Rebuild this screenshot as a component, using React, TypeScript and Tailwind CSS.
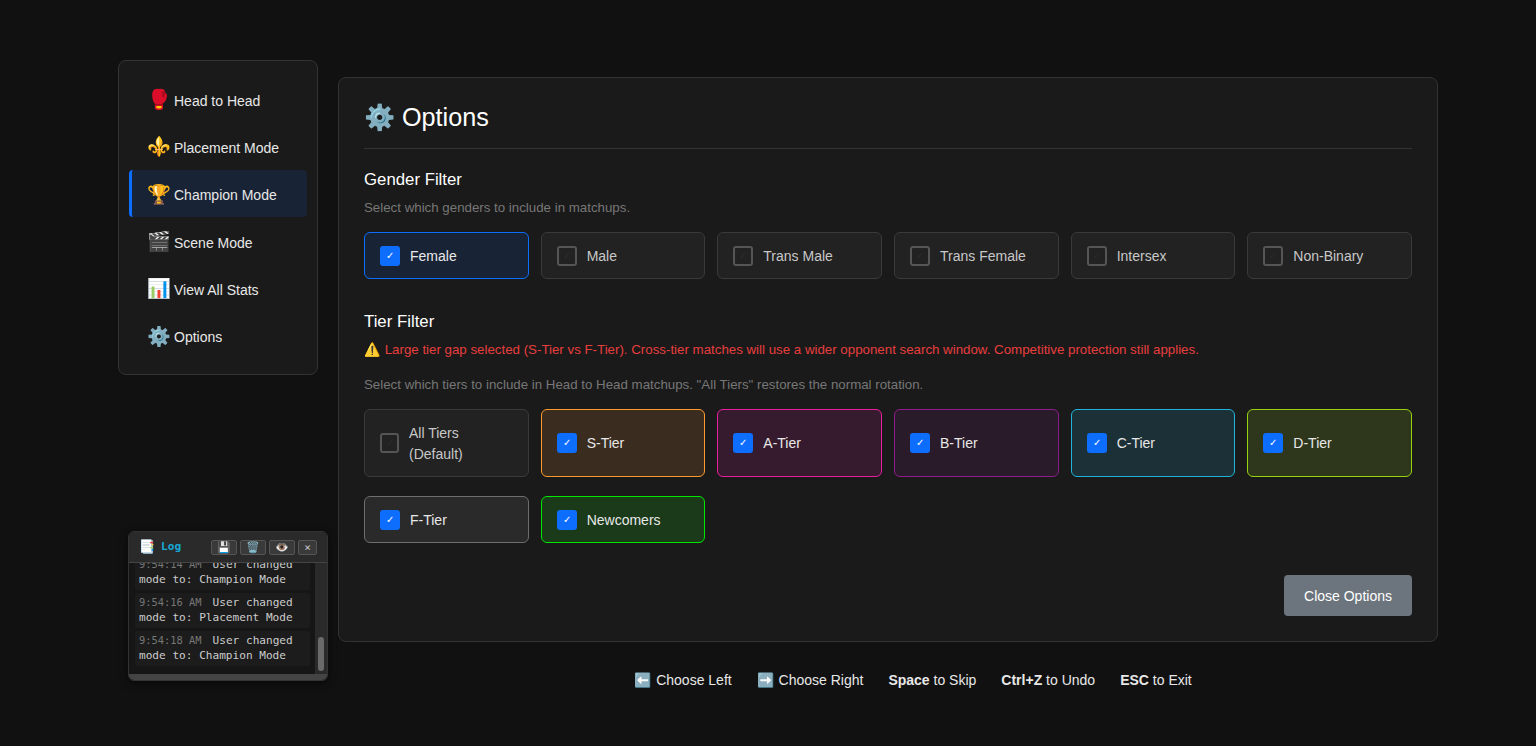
const navItems = [
  { icon: "🥊", label: "Head to Head" },
  { icon: "⚜️", label: "Placement Mode" },
  { icon: "🏆", label: "Champion Mode", active: true },
  { icon: "🎬", label: "Scene Mode" },
  { icon: "📊", label: "View All Stats" },
  { icon: "⚙️", label: "Options" },
];

const genders = ["Female", "Male", "Trans Male", "Trans Female", "Intersex", "Non-Binary"];

const tiers = [
  { label: "All Tiers (Default)", cls: "border-[#3a3a3a] bg-[#222222] text-[#c8c8c8]", on: false },
  { label: "S-Tier", cls: "border-[#ff9a2e] bg-[#3a2d20] text-[#e8e8e8]", on: true },
  { label: "A-Tier", cls: "border-[#e91e9c] bg-[#361b2e] text-[#e8e8e8]", on: true },
  { label: "B-Tier", cls: "border-[#8e1c8e] bg-[#2a1b2a] text-[#e8e8e8]", on: true },
  { label: "C-Tier", cls: "border-[#1eb4dc] bg-[#1c3037] text-[#e8e8e8]", on: true },
  { label: "D-Tier", cls: "border-[#96d20f] bg-[#2e371b] text-[#e8e8e8]", on: true },
  { label: "F-Tier", cls: "border-[#6e6e6e] bg-[#2a2a2a] text-[#e8e8e8]", on: true },
  { label: "Newcomers", cls: "border-[#00e600] bg-[#1a3a1a] text-[#e8e8e8]", on: true },
];

function Box({ on, narrow }: { on: boolean; narrow?: boolean }) {
  return on ? (
    <span className="flex h-5 w-5 shrink-0 items-center justify-center rounded-[3px] bg-[#0d6efd] text-[10px] leading-none text-white">✓</span>
  ) : (
    <span className={`flex h-5 shrink-0 items-center justify-center rounded-[3px] border-2 border-[#555555] text-[10px] leading-none text-[#2c2c2c] ${narrow ? "w-[19px]" : "w-5"}`}>✓</span>
  );
}

function Card({ label, on, cls, tall }: { label: string; on: boolean; cls: string; tall?: boolean }) {
  const nudge = !tall || label.startsWith("All");
  return (
    <div className={`flex items-center gap-[10px] rounded-md border px-[15px] text-[14px] leading-[21px] ${tall ? "h-[68px]" : "h-[47px]"} ${cls}`}>
      <Box on={on} narrow={label.startsWith("All")} />
      <span className={nudge ? "pt-[2px]" : ""}>{label}</span>
    </div>
  );
}

function LogEntry({ time, mode }: { time: string; mode: string }) {
  return (
    <div className="rounded-[2px] bg-[#1c1c1c] py-[2px] pl-[4px] text-[11.1px] leading-[15.5px] text-[#cccccc]">
      <span className="mr-[11px] text-[10.4px] text-[#777777]">{time}</span>
      User changed mode to: {mode} Mode
    </div>
  );
}

function MiniBtn({ children, w }: { children: string; w: string }) {
  return (
    <span className={`flex h-[15px] items-center justify-center rounded-[2px] border border-[#555555] bg-[#3a3a3a] text-[11px] leading-none text-[#cccccc] ${w}`}>{children}</span>
  );
}

export default function App() {
  return (
    <div className="relative flex h-[746px] w-[1536px] gap-5 overflow-hidden bg-[#111111] pl-[118px] font-['Liberation_Sans',sans-serif] text-white">
      <aside className="mt-[60px] flex h-[315px] w-[200px] flex-col gap-[0.4px] self-start rounded-lg border border-[#333333] bg-[#1a1a1a] px-[10px] pt-[14.5px]">
        {navItems.map((n) => (
          <div
            key={n.label}
            className={`flex h-[47px] items-center rounded-[4px] text-[14px] text-[#e8e8e8] ${n.active ? "border-l-[3px] border-[#0d6efd] bg-[#182335] pl-[15px]" : "pl-[18px]"}`}
          >
            <span className="w-[22px] pt-[0.8px] text-center text-[19.2px] leading-none">{n.icon}</span>
            <span className="ml-[5px] pt-[4px]">{n.label}</span>
          </div>
        ))}
      </aside>

      <div className="flex w-[1100px] flex-col">
        <main className="mt-[77px] h-[565px] rounded-lg border border-[#333333] bg-[#1a1a1a] px-[25px] pt-[20px]">
          <h1 className="flex h-[51px] items-start border-b border-[#333333] text-[25.2px] leading-[39px] font-normal">⚙️ Options</h1>

          <h2 className="mt-[20px] text-[16.8px] leading-[21px] font-normal">Gender Filter</h2>
          <p className="mt-[8px] text-[13.3px] leading-[20px] text-[#777777]">Select which genders to include in matchups.</p>
          <div className="mt-[14px] grid grid-cols-6 gap-3">
            {genders.map((g, i) => (
              <Card
                key={g}
                label={g}
                on={i === 0}
                cls={i === 0 ? "border-[#0d6efd] bg-[#182335] text-[#e8e8e8]" : "border-[#3a3a3a] bg-[#222222] text-[#c8c8c8]"}
              />
            ))}
          </div>

          <h2 className="mt-[32px] text-[16.8px] leading-[21px] font-normal">Tier Filter</h2>
          <p className="mt-[8px] text-[13.3px] leading-[20px] text-[#e83e3e]">⚠️ Large tier gap selected (S-Tier vs F-Tier). Cross-tier matches will use a wider opponent search window. Competitive protection still applies.</p>
          <p className="mt-[15px] text-[13.3px] leading-[20px] text-[#777777]">Select which tiers to include in Head to Head matchups. "All Tiers" restores the normal rotation.</p>
          <div className="mt-[14px] grid grid-cols-6 gap-x-3 gap-y-[19px]">
            {tiers.slice(0, 6).map((t) => (
              <Card key={t.label} label={t.label} on={t.on} cls={t.cls} tall />
            ))}
            {tiers.slice(6).map((t) => (
              <Card key={t.label} label={t.label} on={t.on} cls={t.cls} />
            ))}
          </div>
          <div className="mt-[32px] flex justify-end">
            <button className="h-[41px] w-[128px] rounded-[4px] bg-[#6c757d] pt-[2px] text-[14px] text-white">Close Options</button>
          </div>
        </main>

        <footer className="mt-[28px] flex justify-center gap-[25px] pl-[50px] text-[14px] leading-[21px] text-[#e8e8e8]">
          <span><span className="mr-px">⬅️</span> Choose Left</span>
          <span><span className="mr-px">➡️</span> Choose Right</span>
          <span><b>Space</b> to Skip</span>
          <span><b>Ctrl+Z</b> to Undo</span>
          <span><b>ESC</b> to Exit</span>
        </footer>
      </div>

      <div className="absolute top-[531px] left-[128px] flex h-[150px] w-[200px] flex-col overflow-hidden rounded-md border border-[#333333] bg-[#161616] font-['DejaVu_Sans_Mono',monospace] shadow-[0_2px_8px_rgba(0,0,0,0.6)]">
        <div className="flex h-[31px] shrink-0 items-center justify-between border-b border-[#444444] bg-[#2a2a2a] px-[10px]">
          <span className="flex items-center gap-[6px] text-[11.2px] font-bold text-[#17a8d4]"><span className="text-[13px]">📑</span>Log</span>
          <span className="flex gap-[3px]">
            <MiniBtn w="w-[26px]">💾</MiniBtn>
            <MiniBtn w="w-[26px]">🗑️</MiniBtn>
            <MiniBtn w="w-[26px]">👁️</MiniBtn>
            <MiniBtn w="w-[19px]">×</MiniBtn>
          </span>
        </div>
        <div className="flex min-h-0 flex-1">
          <div className="min-h-0 flex-1 overflow-hidden">
            <div className="-mt-[8.5px] flex flex-col gap-[3px] pr-[5px] pl-[6px]">
              <LogEntry time="9:54:14 AM" mode="Champion" />
              <LogEntry time="9:54:16 AM" mode="Placement" />
              <LogEntry time="9:54:18 AM" mode="Champion" />
            </div>
          </div>
          <div className="relative w-[12px] shrink-0 bg-[#2a2a2a]">
            <div className="absolute top-[74px] left-[3px] h-[34px] w-[6px] rounded-[3px] bg-[#6a6a6a]" />
          </div>
        </div>
        <div className="h-[6px] shrink-0 bg-[#444444]" />
      </div>
    </div>
  );
}
